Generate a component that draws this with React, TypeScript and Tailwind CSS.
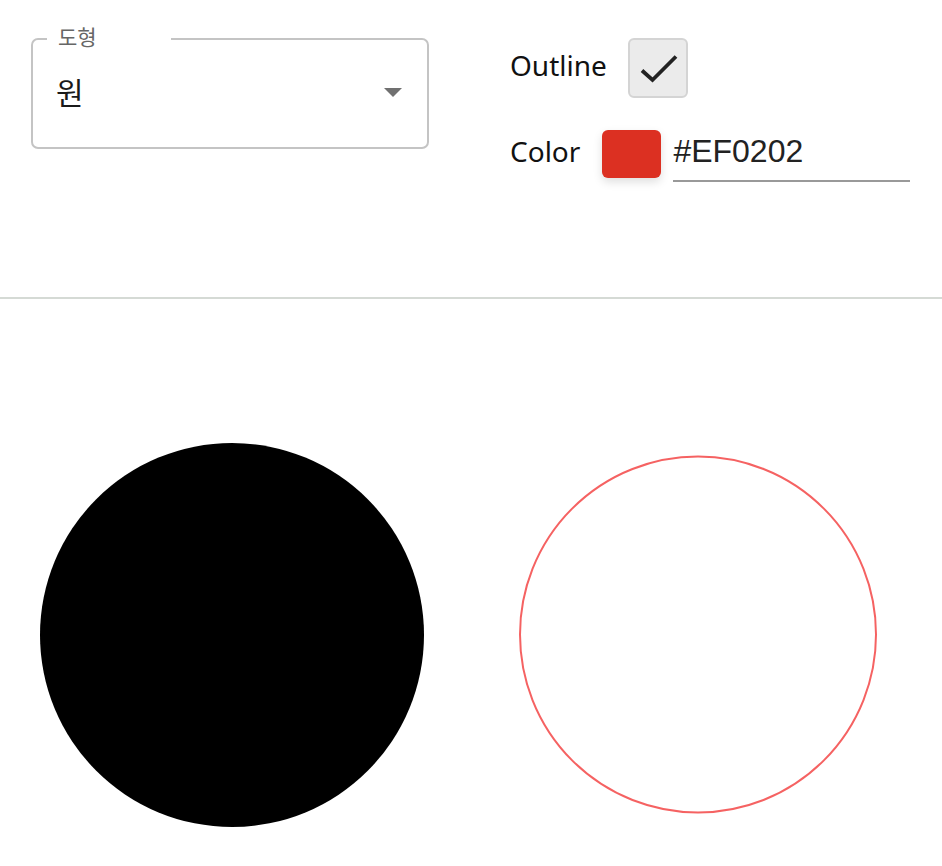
import React from "react";

export default function App() {
  return (
    <div className="w-[942px] h-[866px] bg-white overflow-hidden" style={{ fontFamily: '"Noto Sans", "Noto Sans CJK KR", sans-serif' }}>
      <div className="h-[297px] flex items-start pl-[31px] pt-[38px]">
        <div className="relative w-[398px] h-[111px]">
          <div className="absolute inset-0 rounded-[7px] border-2 border-[#c4c4c4]" />
          <div className="absolute left-[16px] top-[-4px] w-[124px] h-[8px] bg-white" />
          <div className="absolute left-[27px] top-[-14px] text-[21px] leading-[24px] text-[#666666]" style={{ fontFamily: '"Noto Sans CJK KR", sans-serif' }}>
            도형
          </div>
          <div className="relative h-full flex items-center pl-[25px] pr-[27px] pb-[5px]">
            <span className="flex-1 text-[30px] leading-none text-[#1a1a1a]" style={{ fontFamily: '"Noto Sans CJK KR", sans-serif' }}>원</span>
            <svg width="18" height="9" viewBox="0 0 18 9" className="mt-[2px]">
              <polygon points="0,0 18,0 9,9" fill="#707070" />
            </svg>
          </div>
        </div>
        <div className="ml-[81px] flex flex-col">
          <div className="flex items-center h-[60px]">
            <span className="text-[28px] leading-none text-[#111] pb-[6px]">Outline</span>
            <div className="ml-[21px] w-[60px] h-[60px] rounded-[6px] border-2 border-[#d4d4d4] bg-[#ebebeb] flex items-center justify-center">
              <svg width="56" height="56" viewBox="0 0 56 56" className="shrink-0">
                <polyline points="12,30.5 22.5,40 46,16.5" fill="none" stroke="#222" strokeWidth="3.8" />
              </svg>
            </div>
          </div>
          <div className="flex items-start mt-[32px]">
            <span className="text-[28px] leading-none text-[#111] mt-[7px]">Color</span>
            <div className="ml-[22px] w-[59px] h-[48px] rounded-[6px] bg-[#dc3022] shadow-[0_4px_10px_rgba(0,0,0,0.13)]" />
            <div className="ml-[12px] w-[237px] h-[52px] border-b-2 border-[#999999] flex items-start">
              <span className="text-[32px] leading-none text-[#222] mt-[5px]" style={{ fontFamily: '"Liberation Sans", Arial, sans-serif' }}>#EF0202</span>
            </div>
          </div>
        </div>
      </div>
      <div className="h-[2px] bg-[#d5dad5]" />
      <svg width="942" height="567" viewBox="0 299 942 567" className="block">
        <circle cx="232" cy="635" r="192" fill="#000" />
        <circle cx="698" cy="634.5" r="178" fill="none" stroke="#ef0202" strokeOpacity="0.62" strokeWidth="2" />
      </svg>
    </div>
  );
}
